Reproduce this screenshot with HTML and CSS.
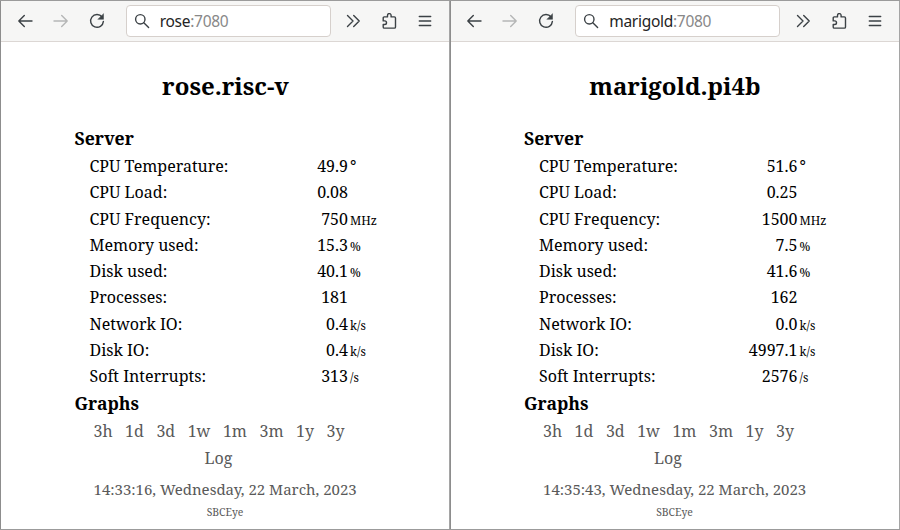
FILE: index.html
```html
<!DOCTYPE html>
<html lang="en">
<head>
<meta charset="utf-8">
<title>SBCEye</title>
<link rel="stylesheet" href="styles.css">
</head>
<body>
<svg width="0" height="0" class="defs">
  <symbol id="back" viewBox="0 0 16 16"><path d="M15 8H1.8M7.3 2.5L1.8 8l5.5 5.5"/></symbol>
  <symbol id="forward" viewBox="0 0 16 16"><path d="M1 8h13.2M8.7 2.5L14.2 8l-5.5 5.5"/></symbol>
  <symbol id="reload" viewBox="0 0 16 16"><path d="M13.1 4A6.4 6.4 0 1 0 14.4 8.4"/><path class="solid" d="M14.5 1v5.3H9.2z"/></symbol>
  <symbol id="search" viewBox="0 0 16 16"><circle cx="6.3" cy="6.3" r="4.7"/><path d="M9.8 9.8l4.8 4.8"/></symbol>
  <symbol id="more" viewBox="0 0 16 16"><path d="M2.5 2.5L8 8l-5.5 5.5M8.7 2.5L14.2 8l-5.5 5.5"/></symbol>
  <symbol id="puzzle" viewBox="0 0 16 16"><path d="M2.2 6.6V4.9q0-1 1-1h3.3V2.4a1.8 1.8 0 0 1 3.6 0v1.5h3.2q1.2 0 1.2 1.2v8.8q0 1.2-1.2 1.2H3.4q-1.2 0-1.2-1.2v-2.4h1.5a1.8 1.8 0 0 0 0-3.6H2.2z"/></symbol>
  <symbol id="menu" viewBox="0 0 16 16"><path d="M2.3 3.5h11.4M2.3 8h11.4M2.3 12.5h11.4"/></symbol>
</svg>
<div class="desktop">
  <section class="window">
    <header class="toolbar">
      <svg class="icon"><use href="#back"/></svg>
      <svg class="icon disabled"><use href="#forward"/></svg>
      <svg class="icon"><use href="#reload"/></svg>
      <div class="address"><svg class="icon"><use href="#search"/></svg><span class="url">rose<span class="port">:7080</span></span></div>
      <svg class="icon"><use href="#more"/></svg>
      <svg class="icon"><use href="#puzzle"/></svg>
      <svg class="icon"><use href="#menu"/></svg>
    </header>
    <main class="page">
      <h1>rose.risc-v</h1>
      <h2>Server</h2>
      <dl class="stats">
        <dt>CPU Temperature:</dt><dd>49.9</dd><dd class="unit degree">°</dd>
        <dt>CPU Load:</dt><dd>0.08</dd><dd class="unit"></dd>
        <dt>CPU Frequency:</dt><dd>750</dd><dd class="unit">MHz</dd>
        <dt>Memory used:</dt><dd>15.3</dd><dd class="unit">%</dd>
        <dt>Disk used:</dt><dd>40.1</dd><dd class="unit">%</dd>
        <dt>Processes:</dt><dd>181</dd><dd class="unit"></dd>
        <dt>Network IO:</dt><dd>0.4</dd><dd class="unit">k/s</dd>
        <dt>Disk IO:</dt><dd>0.4</dd><dd class="unit">k/s</dd>
        <dt>Soft Interrupts:</dt><dd>313</dd><dd class="unit">/s</dd>
      </dl>
      <h2 class="graphs">Graphs</h2>
      <nav class="ranges"><a>3h</a><a>1d</a><a>3d</a><a>1w</a><a>1m</a><a>3m</a><a>1y</a><a>3y</a></nav>
      <a class="log">Log</a>
      <div class="time">14:33:16, Wednesday, 22 March, 2023</div>
      <div class="credit">SBCEye</div>
    </main>
  </section>
  <section class="window">
    <header class="toolbar">
      <svg class="icon"><use href="#back"/></svg>
      <svg class="icon disabled"><use href="#forward"/></svg>
      <svg class="icon"><use href="#reload"/></svg>
      <div class="address"><svg class="icon"><use href="#search"/></svg><span class="url">marigold<span class="port">:7080</span></span></div>
      <svg class="icon"><use href="#more"/></svg>
      <svg class="icon"><use href="#puzzle"/></svg>
      <svg class="icon"><use href="#menu"/></svg>
    </header>
    <main class="page">
      <h1>marigold.pi4b</h1>
      <h2>Server</h2>
      <dl class="stats">
        <dt>CPU Temperature:</dt><dd>51.6</dd><dd class="unit degree">°</dd>
        <dt>CPU Load:</dt><dd>0.25</dd><dd class="unit"></dd>
        <dt>CPU Frequency:</dt><dd>1500</dd><dd class="unit">MHz</dd>
        <dt>Memory used:</dt><dd>7.5</dd><dd class="unit">%</dd>
        <dt>Disk used:</dt><dd>41.6</dd><dd class="unit">%</dd>
        <dt>Processes:</dt><dd>162</dd><dd class="unit"></dd>
        <dt>Network IO:</dt><dd>0.0</dd><dd class="unit">k/s</dd>
        <dt>Disk IO:</dt><dd>4997.1</dd><dd class="unit">k/s</dd>
        <dt>Soft Interrupts:</dt><dd>2576</dd><dd class="unit">/s</dd>
      </dl>
      <h2 class="graphs">Graphs</h2>
      <nav class="ranges"><a>3h</a><a>1d</a><a>3d</a><a>1w</a><a>1m</a><a>3m</a><a>1y</a><a>3y</a></nav>
      <a class="log">Log</a>
      <div class="time">14:35:43, Wednesday, 22 March, 2023</div>
      <div class="credit">SBCEye</div>
    </main>
  </section>
</div>
</body>
</html>
```
FILE: styles.css
```css
* { box-sizing: border-box; }
body { margin: 0; background: #fff; }
.defs { display: block; position: absolute; }
.desktop {
  display: grid;
  grid-template-columns: 449.5px 450.5px;
  width: 900px;
  height: 530px;
  border-top: 1px solid #9b9b9b;
  border-bottom: 1px solid #9b9b9b;
  overflow: hidden;
}
.window { border-left: 1px solid #8d8d8d; border-right: 1px solid #a5a5a5; overflow: hidden; }
.toolbar {
  display: flex;
  align-items: center;
  height: 41px;
  padding: 0 0 1px 15.5px;
  background: #f6f6f5;
  border-bottom: 1px solid #dcd7d4;
}
.icon {
  flex: none;
  width: 16px;
  height: 16px;
  margin-right: 20px;
  fill: none;
  stroke: #3b4145;
  stroke-width: 1.4;
  stroke-linecap: round;
  stroke-linejoin: round;
  overflow: visible;
}
.solid { fill: #3b4145; stroke-width: .5; }
.disabled { stroke: #b5b6b6; }
.address {
  display: flex;
  align-items: center;
  flex: none;
  width: 205px;
  height: 32px;
  margin: 0 14.8px 0 1.2px;
  padding-left: 7px;
  background: #fff;
  border: 1px solid #d6d0cc;
  border-radius: 4px;
}
.address .icon { margin-right: 10px; }
.url { font: 15.5px/30px "Noto Sans", sans-serif; letter-spacing: -.28px; color: #242424; }
.port { color: #888; }
.page {
  display: flex;
  flex-direction: column;
  width: 302px;
  margin-left: 73.5px;
  font-family: "Noto Serif", "DejaVu Serif", serif;
  font-size: 16px;
  color: #000;
}
h1 { margin: 27px 0 0; font-size: 24px; line-height: 34px; text-align: center; white-space: nowrap; }
h2 { margin: 21px 0 0; font-size: 17.6px; line-height: 28px; }
.stats {
  display: grid;
  grid-template-columns: 171.5px 87px 43.5px;
  grid-auto-rows: 26.25px;
  margin: 1px 0 0 15px;
  line-height: 26px;
  white-space: nowrap;
}
dd { margin: 0; text-align: right; }
.unit { padding-left: 2px; text-align: left; font-size: 12px; line-height: 29px; }
.degree { font-size: 16px; line-height: 26px; }
.graphs { margin: 0; }
.ranges { display: flex; gap: 12.5px; padding-left: 19px; line-height: 28px; color: #595959; }
.log { width: 288px; text-align: center; line-height: 26px; color: #595959; }
.time { margin-top: 4px; padding-left: 19px; font-size: 15px; letter-spacing: -.01px; line-height: 28px; color: #595959; white-space: nowrap; }
.credit { width: 301px; font-size: 10.4px; line-height: 19px; text-align: center; color: #595959; }
```
